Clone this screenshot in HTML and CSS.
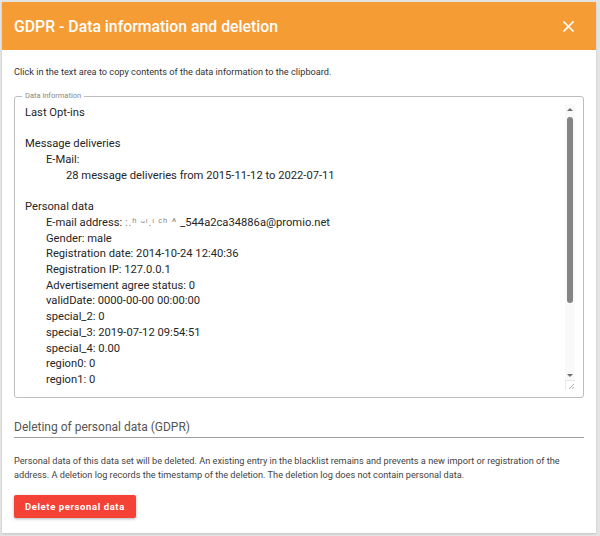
FILE: index.html
```html
<!DOCTYPE html>
<html>
<head>
<meta charset="utf-8">
<link rel="stylesheet" href="styles.css">
</head>
<body>
<div class="dialog">
  <div class="header">
    <div class="title">GDPR - Data information and deletion</div>
    <div class="close">
      <svg width="11" height="11" viewBox="0 0 11 11"><path d="M1 1L10 10M10 1L1 10" stroke="#fff" stroke-width="1.7" stroke-linecap="square"/></svg>
    </div>
  </div>
  <div class="body">
    <p class="hint">Click in the text area to copy contents of the data information to the clipboard.</p>
    <fieldset class="field">
      <legend>Data information</legend>
      <div class="area">
        <div class="content">
          <div class="l0">Last Opt-ins</div>
          <div class="blank"></div>
          <div class="l0">Message deliveries</div>
          <div class="l1">E-Mail:</div>
          <div class="l2">28 message deliveries from 2015-11-12 to 2022-07-11</div>
          <div class="blank"></div>
          <div class="l0">Personal data</div>
          <div class="l1">E-mail address: <span class="blur">:.ʰ ᵕᶦ.ᶦ ᶜʰ ^</span>_544a2ca34886a@promio.net</div>
          <div class="l1">Gender: male</div>
          <div class="l1">Registration date: 2014-10-24 12:40:36</div>
          <div class="l1">Registration IP: 127.0.0.1</div>
          <div class="l1">Advertisement agree status: 0</div>
          <div class="l1">validDate: 0000-00-00 00:00:00</div>
          <div class="l1">special_2: 0</div>
          <div class="l1">special_3: 2019-07-12 09:54:51</div>
          <div class="l1">special_4: 0.00</div>
          <div class="l1">region0: 0</div>
          <div class="l1">region1: 0</div>
        </div>
        <div class="scroll">
          <div class="arrow up"></div>
          <div class="track"><div class="thumb"></div></div>
          <div class="arrow down"></div>
          <div class="resize">
            <svg width="8" height="8" viewBox="0 0 8 8"><path d="M7 2L2 7M7 5L5 7" stroke="#9a9a9a" stroke-width="0.8"/></svg>
          </div>
        </div>
      </div>
    </fieldset>
    <h3 class="section">Deleting of personal data (GDPR)</h3>
    <p class="desc">Personal data of this data set will be deleted. An existing entry in the blacklist remains and prevents a new import or registration of the address. A deletion log records the timestamp of the deletion. The deletion log does not contain personal data.</p>
    <button class="delete">Delete personal data</button>
  </div>
</div>
</body>
</html>
```
FILE: styles.css
```css
html, body {
  margin: 0;
  padding: 0;
}
body {
  background: #e4e4e4;
  font-family: Roboto, "Liberation Sans", sans-serif;
  width: 600px;
  height: 536px;
  overflow: hidden;
}
.dialog {
  margin: 2px 0 0 2px;
  width: 594px;
  height: 531px;
  background: #fff;
  box-shadow: 0 1px 2px rgba(0,0,0,0.15);
  display: flex;
  flex-direction: column;
}
.header {
  height: 48px;
  background: #f69c34;
  display: flex;
  align-items: center;
  justify-content: space-between;
  padding: 0 22px 0 12px;
}
.title {
  color: #fff;
  font-size: 15.8px;
  font-weight: 500;
  margin-top: 1px;
}
.close {
  display: flex;
  align-items: center;
  margin-top: 1px;
}
.body {
  padding: 0 12px;
  display: flex;
  flex-direction: column;
}
.hint {
  margin: 15px 0 0 0;
  font-size: 9.2px;
  color: #333;
  line-height: 14px;
}
.field {
  margin: 13px 0 0 0;
  padding: 4px 8px 7px 10px;
  border: 1px solid #bdbdbd;
  border-radius: 3px;
}
.field legend {
  font-size: 7.5px;
  color: #888;
  padding: 0 3px;
  margin-left: -3px;
  line-height: 8px;
}
.area {
  display: flex;
  height: 286px;
}
.content {
  flex: 1;
  overflow: hidden;
  font-size: 11.2px;
  line-height: 15.7px;
  color: #262626;
  padding-top: 1px;
}
.blank { height: 15.7px; }
.l1 { padding-left: 21px; }
.l2 { padding-left: 41px; }
.blur {
  color: #8a8a8a;
  letter-spacing: 0.8px;
  white-space: nowrap;
  margin-right: 3px;
}
.scroll {
  width: 10px;
  display: flex;
  flex-direction: column;
  align-items: center;
  background: #f9f9f9;
  padding-top: 4px;
}
.arrow {
  width: 0;
  height: 0;
  border-left: 3px solid transparent;
  border-right: 3px solid transparent;
}
.arrow.up { border-bottom: 3px solid #6e6e6e; margin-bottom: 6px; }
.arrow.down { border-top: 3px solid #6e6e6e; margin-top: 5px; }
.track {
  flex: 1;
  display: flex;
  flex-direction: column;
  width: 6px;
}
.thumb {
  height: 186px;
  background: #858585;
  border-radius: 3px;
}
.resize {
  height: 10px;
  width: 10px;
  margin-top: 3px;
  display: flex;
  align-items: flex-end;
  justify-content: flex-end;
  background: #fff;
  box-sizing: border-box;
  border-left: 1px solid #e8e8e8;
  border-top: 1px solid #e8e8e8;
}
.section {
  margin: 22px 0 0 0;
  font-size: 12px;
  line-height: 14px;
  font-weight: 400;
  color: #555;
  padding-bottom: 3px;
  border-bottom: 1px solid #9e9e9e;
}
.desc {
  margin: 16px 0 0 0;
  font-size: 9.2px;
  color: #444;
  line-height: 14px;
}
.delete {
  align-self: flex-start;
  margin-top: 13px;
  height: 23px;
  padding: 0 11px;
  background: #f44336;
  color: #fff;
  border: none;
  border-radius: 2px;
  font-family: Roboto, "Liberation Sans", sans-serif;
  font-size: 9.5px;
  font-weight: 700;
  letter-spacing: 0.6px;
  box-shadow: 0 1px 3px rgba(0,0,0,0.3);
}
```
